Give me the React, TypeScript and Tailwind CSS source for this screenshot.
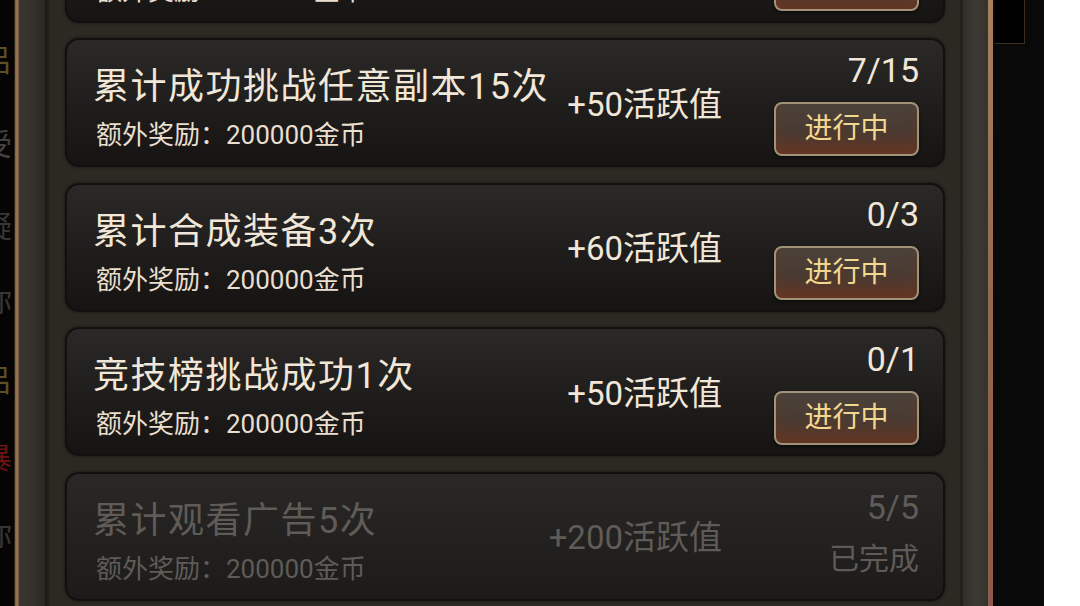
import React from "react";

type Task = {
    title: string;
    reward: string;
    points: string;
    progress: string;
    done?: boolean;
};

const tasks: Task[] = [
    { title: "累计登录游戏3次", reward: "额外奖励：200000金币", points: "+30活跃值", progress: "1/3" },
    { title: "累计成功挑战任意副本15次", reward: "额外奖励：200000金币", points: "+50活跃值", progress: "7/15" },
    { title: "累计合成装备3次", reward: "额外奖励：200000金币", points: "+60活跃值", progress: "0/3" },
    { title: "竞技榜挑战成功1次", reward: "额外奖励：200000金币", points: "+50活跃值", progress: "0/1" },
    { title: "累计观看广告5次", reward: "额外奖励：200000金币", points: "+200活跃值", progress: "5/5", done: true },
];

const font = { fontFamily: "Roboto, 'Noto Sans CJK SC', 'Noto Sans', sans-serif" };

function TaskCard({ task }: { task: Task }) {
    const done = task.done;
    const muted = "text-[#5f5b57]";
    return (
        <div
            className={`h-[129px] shrink-0 flex items-center pl-[26px] pr-[24px] rounded-[14px] border-2 border-[#12100f] shadow-[0_0_3px_rgba(0,0,0,0.6)] ${
                done
                    ? "bg-gradient-to-b from-[#292827] to-[#1c1b1a]"
                    : "bg-gradient-to-b from-[#2a2928] to-[#151413]"
            }`}
        >
            <div className="flex-1 flex flex-col mt-[12px] min-w-0">
                <div
                    className={`text-[36px] leading-[40px] tracking-[1.5px] whitespace-nowrap ${
                        done ? muted : "text-[#f1e7d8]"
                    }`}
                >
                    {task.title}
                </div>
                <div
                    className={`mt-[13px] pl-[3px] text-[26px] leading-[30px] whitespace-nowrap ${
                        done ? muted : "text-[#eadfcf]"
                    }`}
                >
                    {task.reward}
                </div>
            </div>
            <div
                className={`mr-[52px] mt-[4px] text-[33px] leading-[36px] whitespace-nowrap ${
                    done ? muted : "text-[#f1e7d8]"
                }`}
            >
                {task.points}
            </div>
            <div className="w-[145px] flex flex-col items-end mt-[2px]">
                <div className={`text-[34px] leading-[36px] ${done ? muted : "text-[#f1e7d8]"}`}>
                    {task.progress}
                </div>
                {done ? (
                    <div className={`mt-[6px] h-[54px] flex items-center text-[30px] ${muted}`}>已完成</div>
                ) : (
                    <div className="mt-[14px] w-[145px] h-[54px] rounded-[8px] border-2 border-[#a0937a] bg-gradient-to-b from-[#4b423b] via-[#4a3b32] to-[#5a3627] shadow-[inset_0_-8px_12px_rgba(120,55,30,0.35),0_1px_3px_rgba(0,0,0,0.7)] flex items-center justify-center text-[28px] text-[#f2d88f]">
                        进行中
                    </div>
                )}
            </div>
        </div>
    );
}

export default function App() {
    const ghostChars = [
        { c: "吕", cls: "text-[#5e4f28] mt-[46px]" },
        { c: "受", cls: "text-[#43403d] mt-[54px]" },
        { c: "疑", cls: "text-[#383634] mt-[52px]" },
        { c: "你", cls: "text-[#383634] mt-[44px]" },
        { c: "吕", cls: "text-[#5e4f28] mt-[50px]" },
        { c: "暴", cls: "text-[#6e1212] mt-[48px]" },
        { c: "你", cls: "text-[#383634] mt-[46px]" },
    ];

    return (
        <div className="w-[1080px] h-[606px] overflow-hidden flex bg-black" style={font}>
            {/* left background strip */}
            <div className="w-[14px] shrink-0 overflow-hidden bg-[#050505]">
                <div className="flex flex-col -ml-[18px]">
                    {ghostChars.map((g, i) => (
                        <span key={i} className={`text-[30px] leading-[30px] ${g.cls}`}>
                            {g.c}
                        </span>
                    ))}
                </div>
            </div>
            <div className="w-[1px] shrink-0 bg-[#2a2016]" />
            <div className="w-[4px] shrink-0 bg-gradient-to-r from-[#7a5e44] via-[#9a7a58] to-[#6b5240]" />
            <div className="w-[26px] shrink-0 bg-gradient-to-r from-[#3a3530] via-[#35312c] to-[#2b2824]" />
            <div className="w-[5px] shrink-0 bg-gradient-to-r from-[#1c1a17] to-[#262320]" />

            {/* panel */}
            <div className="flex-1 bg-[#2c2923] px-[15px] overflow-hidden">
                <div className="flex flex-col gap-[15.5px] -mt-[106.5px]">
                    {tasks.map((t, i) => (
                        <TaskCard key={i} task={t} />
                    ))}
                </div>
            </div>

            {/* right frame */}
            <div className="w-[3px] shrink-0 bg-[#24211d]" />
            <div className="w-[25px] shrink-0 bg-gradient-to-r from-[#302c27] via-[#3d3933] to-[#36322d]" />
            <div className="w-[5px] shrink-0 bg-gradient-to-b from-[#a78060] via-[#94684e] to-[#8c5a4a]" />

            {/* right background strip */}
            <div className="w-[51px] shrink-0 bg-[#0a0909] flex flex-col">
                <div className="ml-[2px] w-[30px] h-[44px] bg-black border-r border-b border-[#3a2e1e]" />
            </div>
            <div className="w-[36px] shrink-0 bg-white" />
        </div>
    );
}
